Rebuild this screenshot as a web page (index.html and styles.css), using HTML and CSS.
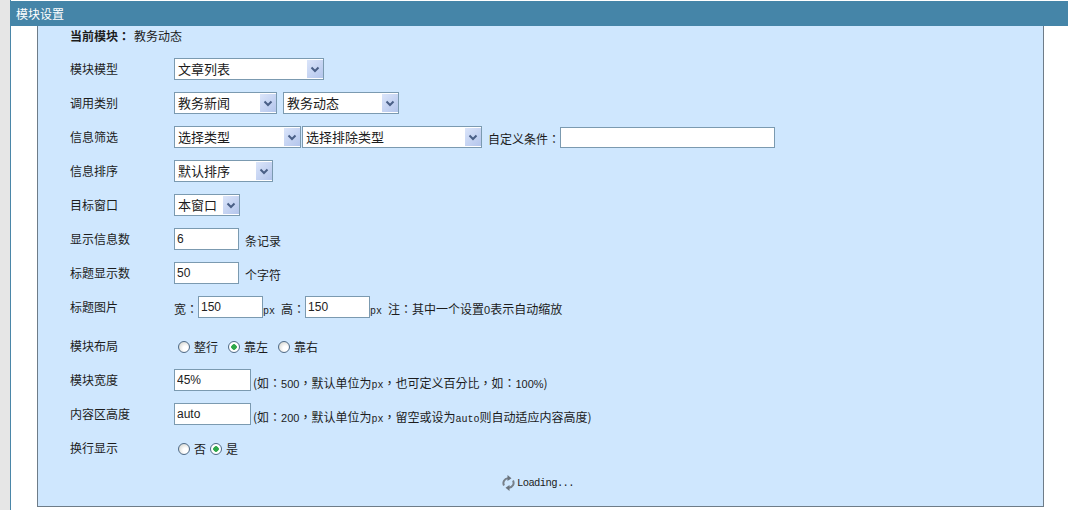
FILE: index.html
```html
<!DOCTYPE html>
<html lang="zh">
<head>
<meta charset="utf-8">
<title>模块设置</title>
<link rel="stylesheet" href="styles.css">
</head>
<body>
<svg class="defs" width="0" height="0" aria-hidden="true"><defs>
<g id="chev"><path d="M4.5 7.5 8 11l3.5-3.5" fill="none" stroke="#4a5f86" stroke-width="2"/></g>
</defs></svg>
<main class="window">
  <h1 class="title">模块设置</h1>
  <section class="panel">
    <div class="current"><b lang="zh-TW">当前模块：</b><span class="current-value">教务动态</span></div>

    <div class="row"><label class="label">模块模型</label>
      <span class="select w150"><select><option>文章列表</option></select><svg class="arrow" viewBox="0 0 16 18"><use href="#chev"/></svg></span>
    </div>

    <div class="row"><label class="label">调用类别</label>
      <span class="select w103"><select><option>教务新闻</option></select><svg class="arrow" viewBox="0 0 16 18"><use href="#chev"/></svg></span>
      <span class="select w116 gap6"><select><option>教务动态</option></select><svg class="arrow" viewBox="0 0 16 18"><use href="#chev"/></svg></span>
    </div>

    <div class="row"><label class="label">信息筛选</label>
      <span class="select w127"><select><option>选择类型</option></select><svg class="arrow" viewBox="0 0 16 18"><use href="#chev"/></svg></span>
      <span class="select w180 gap1"><select><option>选择排除类型</option></select><svg class="arrow" viewBox="0 0 16 18"><use href="#chev"/></svg></span>
      <span class="text gap6" lang="zh-TW">自定义条件：</span>
      <input class="input w215" type="text">
    </div>

    <div class="row"><label class="label">信息排序</label>
      <span class="select w99"><select><option>默认排序</option></select><svg class="arrow" viewBox="0 0 16 18"><use href="#chev"/></svg></span>
    </div>

    <div class="row"><label class="label">目标窗口</label>
      <span class="select w66"><select><option>本窗口</option></select><svg class="arrow" viewBox="0 0 16 18"><use href="#chev"/></svg></span>
    </div>

    <div class="row"><label class="label">显示信息数</label>
      <input class="input w65" type="text" value="6"><span class="text gap6">条记录</span>
    </div>

    <div class="row"><label class="label">标题显示数</label>
      <input class="input w65" type="text" value="50"><span class="text gap6">个字符</span>
    </div>

    <div class="row"><label class="label">标题图片</label>
      <span class="text" lang="zh-TW">宽：</span><input class="input w65" type="text" value="150"><span class="text"><span class="lat unit">px</span></span>
      <span class="text" lang="zh-TW">高：</span><input class="input w65" type="text" value="150"><span class="text"><span class="lat unit">px</span></span>
      <span class="text" lang="zh-TW">注：其中一个设置<span class="num">0</span>表示自动缩放</span>
    </div>

    <div class="row layout"><label class="label">模块布局</label>
      <span class="radios wide">
        <label class="radio"><input type="radio" name="layout"><span>整行</span></label>
        <label class="radio"><input type="radio" name="layout" checked><span>靠左</span></label>
        <label class="radio"><input type="radio" name="layout"><span>靠右</span></label>
      </span>
    </div>

    <div class="row"><label class="label">模块宽度</label>
      <input class="input w77" type="text" value="45%"><span class="text note gap2" lang="zh-TW">(如：<span class="num">500</span>，默认单位为<span class="lat">px</span>，也可定义百分比，如：<span class="num">100%</span>)</span>
    </div>

    <div class="row"><label class="label">内容区高度</label>
      <input class="input w77" type="text" value="auto"><span class="text note gap2" lang="zh-TW">(如：<span class="num">200</span>，默认单位为<span class="lat">px</span>，留空或设为<span class="lat">auto</span>则自动适应内容高度)</span>
    </div>

    <div class="row"><label class="label">换行显示</label>
      <span class="radios">
        <label class="radio"><input type="radio" name="wrap"><span>否</span></label>
        <label class="radio"><input type="radio" name="wrap" checked><span>是</span></label>
      </span>
    </div>

    <div class="loading">
      <svg class="spin" viewBox="0 0 13 16" width="13" height="16"><path d="M2 10.5C.3 7 2.5 3.6 6 3.2M11 5.5c1.700 3.500-.5 6.900-4 7.300" fill="none" stroke="#77808a" stroke-width="2"/><path d="M5.500 0 9.500 3.200 5.500 6zM7.500 10 3.500 12.800 7.500 16z" fill="#6a737d"/></svg>
      <span class="loading-text">Loading...</span>
    </div>
  </section>
</main>
</body>
</html>
```
FILE: styles.css
```css
html, body { margin: 0; height: 510px; overflow: hidden; }
body {
  background: #e6e6e6;
  padding-left: 10px;
  font: 12px/1.2 "Noto Sans CJK SC", "Liberation Sans", sans-serif;
  color: #1c1c1c;
}
.defs { position: absolute; }
.window {
  background: #fff;
  border-left: 1px solid #4a86a8;
  height: 510px;
  padding-top: 1px;
  box-sizing: border-box;
}
.title {
  margin: 0 0 0 -1px;
  height: 25px;
  line-height: 25px;
  padding-left: 6px;
  font-size: 12px;
  font-weight: 400;
  color: #fff;
  background: #4585a8;
}
.panel {
  margin: 0 24px 0 26px;
  height: 481px;
  box-sizing: border-box;
  padding-left: 32px;
  background: #cfe7fe;
  border: 1px solid #6e7c88;
  border-top: 0;
}
.current { height: 26px; padding-top: 2px; line-height: 16px; box-sizing: border-box; font-family: "Noto Sans CJK TC", sans-serif; }
.current b { font-weight: 700; }
.current-value { margin-left: 4px; font-family: "Noto Sans CJK SC", sans-serif; }
.row { display: flex; align-items: center; height: 34px; }
.layout { margin-top: 6px; height: 33px; }
.label { width: 104px; flex: none; }
.text { white-space: nowrap; padding-top: 4px; font-family: "Noto Sans CJK TC", sans-serif; }
.note { padding-top: 6px; }
.lat { font: 10px "Liberation Mono", monospace; }
.num { font: 11px "Liberation Sans", sans-serif; }
.unit { display: inline-block; width: 18px; }
.gap1 { margin-left: 1px; }
.gap2 { margin-left: 2px; }
.gap6 { margin-left: 6px; }

.select { position: relative; display: block; height: 22px; flex: none; }
.select select {
  appearance: none;
  display: block;
  width: 100%;
  height: 22px;
  margin: 0;
  padding: 0 18px 2px 3px;
  border: 1px solid #7b9ab0;
  border-radius: 0;
  background: #fff;
  color: #1c1c1c;
  font: 13px "Noto Sans CJK SC", sans-serif;
}
.arrow {
  position: absolute;
  top: 2px;
  right: 1px;
  width: 16px;
  height: 18px;
  background: linear-gradient(135deg, #dbe5fa, #b3c5ec);
}
.w66 { width: 66px; }
.w99 { width: 99px; }
.w103 { width: 103px; }
.w116 { width: 116px; }
.w127 { width: 127px; }
.w150 { width: 150px; }
.w180 { width: 180px; }

.input {
  height: 22px;
  box-sizing: border-box;
  margin: 0;
  padding: 0 0 1px 2px;
  border: 1px solid #7b9ab0;
  border-radius: 0;
  background: #fff;
  color: #222;
  font: 12px "Liberation Sans", sans-serif;
  flex: none;
}
.w65 { width: 65px; }
.w77 { width: 77px; }
.w215 { width: 215px; height: 21px; }

.radios { display: flex; gap: 4px; padding-left: 4px; padding-top: 2px; }
.radios.wide { gap: 10px; }
.radio { display: flex; align-items: center; gap: 4px; }
.radio input {
  appearance: none;
  width: 12px;
  height: 12px;
  margin: 0;
  border: 1px solid #4f6a86;
  border-radius: 50%;
  background: radial-gradient(circle at 65% 65%, #fff 25%, #cfcfc8 95%);
}
.radio input:checked {
  background: radial-gradient(circle, #2fa84a 0 2.500px, #fff 3px);
}

.loading { display: flex; align-items: center; height: 36px; margin-left: 432px; gap: 2px; }
.loading-text { font: 10.500px "Liberation Mono", monospace; letter-spacing: -0.6px; }
```
